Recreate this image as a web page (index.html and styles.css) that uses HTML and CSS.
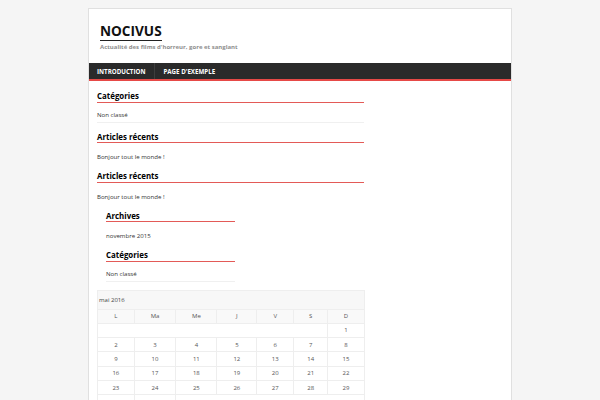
FILE: index.html
```html
<!DOCTYPE html>
<html lang="fr">
<head>
<meta charset="utf-8">
<title>NOCIVUS</title>
<link rel="stylesheet" href="styles.css">
</head>
<body>
<div class="wrap">
  <header class="site-header">
    <div class="site-title">NOCIVUS</div>
    <div class="tagline">Actualité des films d'horreur, gore et sanglant</div>
  </header>
  <nav class="nav">
    <a class="nav-item">INTRODUCTION</a>
    <a class="nav-item">PAGE D'EXEMPLE</a>
  </nav>
  <div class="content">
    <main class="main">
      <section class="widget">
        <h4 class="widget-title">Catégories</h4>
        <ul class="list cats"><li>Non classé</li></ul>
      </section>
      <section class="widget">
        <h4 class="widget-title">Articles récents</h4>
        <ul class="list posts"><li>Bonjour tout le monde !</li></ul>
      </section>
      <section class="widget">
        <h4 class="widget-title">Articles récents</h4>
        <ul class="list posts"><li>Bonjour tout le monde !</li></ul>
      </section>
      <div class="nested">
        <section class="widget">
          <h4 class="widget-title">Archives</h4>
          <ul class="list posts"><li>novembre 2015</li></ul>
        </section>
        <section class="widget">
          <h4 class="widget-title">Catégories</h4>
          <ul class="list cats"><li>Non classé</li></ul>
        </section>
      </div>
      <table class="cal">
        <caption>mai 2016</caption>
        <thead>
          <tr><th>L</th><th>Ma</th><th>Me</th><th>J</th><th>V</th><th>S</th><th>D</th></tr>
        </thead>
        <tbody>
          <tr><td colspan="6" class="pad"></td><td>1</td></tr>
          <tr><td>2</td><td>3</td><td>4</td><td>5</td><td>6</td><td>7</td><td>8</td></tr>
          <tr><td>9</td><td>10</td><td>11</td><td>12</td><td>13</td><td>14</td><td>15</td></tr>
          <tr><td>16</td><td>17</td><td>18</td><td>19</td><td>20</td><td>21</td><td>22</td></tr>
          <tr><td>23</td><td>24</td><td>25</td><td>26</td><td>27</td><td>28</td><td>29</td></tr>
          <tr><td>30</td><td>31</td><td colspan="5" class="pad"></td></tr>
        </tbody>
      </table>
    </main>
  </div>
</div>
</body>
</html>
```
FILE: styles.css
```css
html, body {
  margin: 0;
  padding: 0;
  background: #f5f5f5;
  font-family: "Open Sans", "DejaVu Sans", sans-serif;
  color: #333;
}
.wrap {
  width: 424px;
  box-sizing: border-box;
  margin: 8px auto 0;
  background: #fff;
  border: 1px solid #e0e0e0;
  min-height: 400px;
}
.site-header {
  padding: 10px 11px 12px;
}
.site-title {
  display: inline-block;
  font-size: 13.6px;
  line-height: 17px;
  font-weight: 700;
  color: #111;
  padding-bottom: 0.5px;
  border-bottom: 1.5px solid #222;
}
.tagline {
  margin-top: 2px;
  font-size: 6px;
  line-height: 8px;
  font-weight: 700;
  color: #8f8f8f;
}
.nav {
  display: flex;
  height: 16px;
  background: #2a2a2a;
  border-bottom: 2px solid #e64946;
}
.nav-item {
  display: flex;
  align-items: center;
  padding: 0 9px 0 8px;
  font-size: 6.2px;
  font-weight: 700;
  color: #fff;
  border-right: 1px solid #3e3e3e;
}
.nav-item + .nav-item {
  border-right: none;
}
.content {
  padding: 10px 8px 0;
}
.main {
  width: 267px;
}
.widget {
  margin-bottom: 9px;
}
.nested .widget:last-child {
  margin-bottom: 8px;
}
.widget-title {
  margin: 0 0 8px;
  font-size: 7.9px;
  line-height: 10px;
  font-weight: 700;
  color: #000;
  padding-bottom: 0.5px;
  border-bottom: 1.5px solid #e35a57;
}
.list {
  list-style: none;
  margin: 0;
  padding: 0;
}
.list li {
  font-size: 6.1px;
  line-height: 8px;
  color: #333;
}
.cats li {
  padding-bottom: 3px;
  border-bottom: 1px solid #f0f0f0;
}
.posts li {
  padding: 2px 0 1px;
}
.nested {
  margin-left: 9px;
  width: 129px;
}
.cal {
  width: 267px;
  border-collapse: collapse;
  table-layout: fixed;
  font-size: 6px;
  color: #555;
}
.cal caption {
  text-align: left;
  height: 19px;
  line-height: 19px;
  padding: 0 1px;
  background: #f7f7f7;
  border: 1px solid #eee;
  border-bottom: none;
  box-sizing: border-box;
  color: #444;
}
.cal th, .cal td {
  height: 14.33px;
  padding: 0;
  text-align: center;
  border: 1px solid #eee;
  font-weight: 400;
  box-sizing: border-box;
}
.cal th {
  background: #f9f9f9;
  color: #555;
}
.cal td.pad {
  background: #fff;
}
.cal th:nth-child(1) { width: 36.7px; }
.cal th:nth-child(2) { width: 41.7px; }
.cal th:nth-child(3) { width: 41px; }
.cal th:nth-child(4) { width: 40px; }
.cal th:nth-child(5) { width: 36.6px; }
.cal th:nth-child(6) { width: 34.4px; }
.cal th:nth-child(7) { width: 36.3px; }
```
